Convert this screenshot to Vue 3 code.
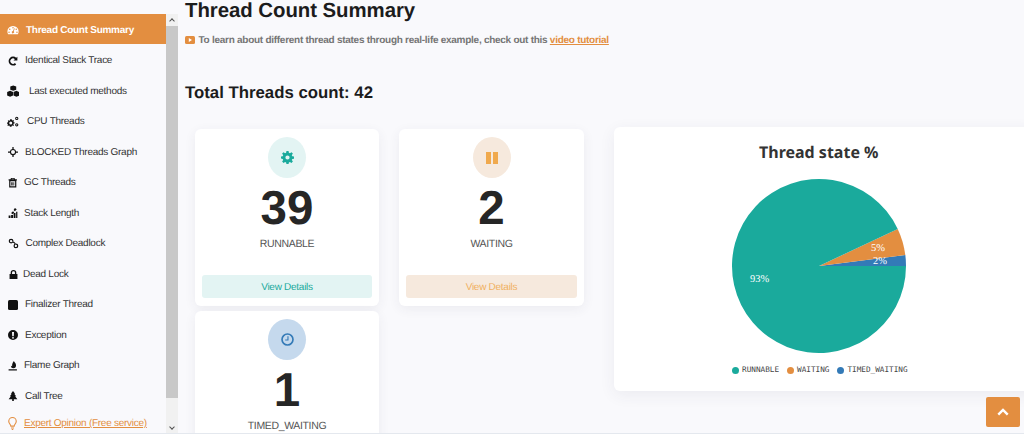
<script setup>
import { computed } from 'vue';

const menu = [
  { label: 'Thread Count Summary', icon: 'gauge', size: 12, gap: 7, active: true },
  { label: 'Identical Stack Trace', icon: 'redo', size: 10, gap: 6 },
  { label: 'Last executed methods', icon: 'cubes', size: 12.5, gap: 10 },
  { label: 'CPU Threads', icon: 'cogs', size: 12, gap: 8 },
  { label: 'BLOCKED Threads Graph', icon: 'cross', size: 10, gap: 6 },
  { label: 'GC Threads', icon: 'trash', size: 9.5, gap: 5 },
  { label: 'Stack Length', icon: 'steps', size: 10, gap: 5 },
  { label: 'Complex Deadlock', icon: 'link', size: 11, gap: 6.5 },
  { label: 'Dead Lock', icon: 'lock', size: 9, gap: 4 },
  { label: 'Finalizer Thread', icon: 'stop', size: 10, gap: 6 },
  { label: 'Exception', icon: 'alert', size: 10, gap: 6 },
  { label: 'Flame Graph', icon: 'flame', size: 9.5, gap: 5 },
  { label: 'Call Tree', icon: 'tree', size: 10, gap: 6 },
];

const pieData = [
  { name: 'TIMED_WAITING', pct: 2, color: '#337ab7' },
  { name: 'WAITING', pct: 5, color: '#e38e40' },
  { name: 'RUNNABLE', pct: 93, color: '#1aaa9c' },
];

const slices = computed(() => {
  let start = 0;
  return pieData.map((s) => {
    const a0 = (start * Math.PI) / 50;
    const a1 = ((start + s.pct) * Math.PI) / 50;
    start += s.pct;
    const x0 = 87 * Math.cos(a0);
    const y0 = -87 * Math.sin(a0);
    const x1 = 87 * Math.cos(a1);
    const y1 = -87 * Math.sin(a1);
    const large = s.pct > 50 ? 1 : 0;
    return { ...s, d: `M0 0L${x0} ${y0}A87 87 0 ${large} 0 ${x1} ${y1}Z` };
  });
});
const legend = [pieData[2], pieData[1], pieData[0]];
</script>

<template>
  <div class="page">
    <aside class="sidebar">
      <ul class="menu">
        <li v-for="item in menu" :key="item.label" class="item" :class="{ active: item.active }">
          <span class="slot" :style="{ marginRight: item.gap + 'px' }">
            <svg class="ico" viewBox="0 0 16 16" :style="{ width: item.size + 'px', height: item.size + 'px' }">
              <path v-if="item.icon === 'gauge'" fill-rule="evenodd" d="M8 2.5a7.5 7.5 0 0 0-7.5 7.5c0 1.4.4 2.6 1 3.6h13c.6-1 1-2.2 1-3.6A7.5 7.5 0 0 0 8 2.5zM8 4a1 1 0 1 1 0 2 1 1 0 0 1 0-2zM3.7 6a1 1 0 1 1 0 2 1 1 0 0 1 0-2zM12.3 6a1 1 0 1 1 0 2 1 1 0 0 1 0-2zM2.7 10a1 1 0 1 1 0 2 1 1 0 0 1 0-2zM13.3 10a1 1 0 1 1 0 2 1 1 0 0 1 0-2zM8 9.2l1.5-3.6.9.4L9 9.6a1.6 1.6 0 1 1-1-.4z" />
              <path v-else-if="item.icon === 'redo'" d="M15 1v6.300H8.700l2.300-2.300A4.300 4.300 0 1 0 11.100 11.200l2 2.200A7.200 7.200 0 1 1 13.100 2.900z" />
              <path v-else-if="item.icon === 'cubes'" d="M8 .5l3.800 1.500v4L8 7.500 4.200 6V2zM4 7.500L7.700 9v4.500L4 15 .2 13.500V9zM12 7.500L15.800 9v4.500L12 15l-3.700-1.500V9z" />
              <path v-else-if="item.icon === 'cogs'" fill-rule="evenodd" d="M5 4l1 .1.3 1.300 1 .5 1.200-.6.8.9-.7 1.100.4 1 1.300.3v1.200l-1.300.3-.4 1-.1.1.8 1.100-.9.9-1.100-.7-1 .4-.3 1.300H3.800l-.3-1.300-1-.4-1.100.7-.9-.9.7-1.100-.4-1L0 10V8.800l1.300-.3.4-1L1 6.400l.9-.9 1.100.7 1-.4.300-1.300zm0 3.400a2 2 0 1 0 0 4 2 2 0 0 0 0-4zM13 1a2.200 2.200 0 0 1 0 4.400A2.200 2.200 0 0 1 13 1zm0 1.400a.8.8 0 1 0 0 1.600.8.8 0 0 0 0-1.600zM13 9.500a2.200 2.200 0 0 1 0 4.400 2.200 2.200 0 0 1 0-4.400zm0 1.400a.8.8 0 1 0 0 1.600.8.8 0 0 0 0-1.600z" />
              <path v-else-if="item.icon === 'cross'" fill-rule="evenodd" d="M7 0h2v3a5 5 0 0 1 4 4h3v2h-3a5 5 0 0 1-4 4v3H7v-3a5 5 0 0 1-4-4H0V7h3a5 5 0 0 1 4-4zm1 4.800a3.200 3.200 0 1 0 0 6.400 3.200 3.200 0 0 0 0-6.400z" />
              <path v-else-if="item.icon === 'trash'" fill-rule="evenodd" d="M5 0h6l.8 2H15v2h-1v12H2V4H1V2h3.200zm1 2h4l-.4-.8H6.400zM4 5.500V14h8V5.500zM5.500 7h1.200v5.500H5.500zM7.400 7h1.200v5.500H7.400zM9.300 7h1.200v5.500H9.300z" />
              <path v-else-if="item.icon === 'steps'" d="M11 0l3 2-3 3-2-2zM8 5l2 2-3 3-2-2zM1 12h3v4H1zM5 11h3v5H5zM9 8h3v8H9zM13 6h2v10h-2z" />
              <path v-else-if="item.icon === 'link'" fill-rule="evenodd" d="M4.500 1a3.500 3.500 0 1 1 0 7 3.500 3.500 0 0 1 0-7zm0 1.800a1.700 1.700 0 1 0 0 3.400 1.700 1.700 0 0 0 0-3.400zM11.500 8a3.500 3.500 0 1 1 0 7 3.500 3.500 0 0 1 0-7zm0 1.800a1.700 1.700 0 1 0 0 3.400 1.700 1.700 0 0 0 0-3.400zM6.500 5.500l1.200-1.200 4 4-1.200 1.200z" />
              <path v-else-if="item.icon === 'lock'" fill-rule="evenodd" d="M8 0a5 5 0 0 1 5 5v2h2v9H1V7h2V5a5 5 0 0 1 5-5zm0 2.400A2.600 2.600 0 0 0 5.400 5v2h5.200V5A2.600 2.600 0 0 0 8 2.400z" />
              <rect v-else-if="item.icon === 'stop'" x="0" y="0" width="16" height="16" rx="2.500" />
              <path v-else-if="item.icon === 'alert'" fill-rule="evenodd" d="M8 0a8 8 0 1 1 0 16A8 8 0 0 1 8 0zM6.400 3l.4 7h2.400l.4-7zM8 11a1.500 1.500 0 1 0 0 3 1.500 1.500 0 0 0 0-3z" />
              <path v-else-if="item.icon === 'flame'" d="M10 0c.5 2.500 3.500 3.500 3.500 7a4.800 4.800 0 0 1-4.500 5C6 12 4.500 10 5 7.500c.5 1 1.200 1.500 2 1.500C6.500 6 7.500 3 10 0zM1 13.800h14V16H1z" />
              <path v-else-if="item.icon === 'tree'" d="M8 0l3.500 4.500H10l3 4h-1.700L15 13H9.300v3H6.700v-3H1l3.700-4.500H3l3-4H4.500z" />
            </svg>
          </span>
          <span>{{ item.label }}</span>
        </li>
        <li class="item expert">
          <svg class="bulb" viewBox="0 0 12 18" fill="none" stroke="#e38e40" stroke-width="1.500">
            <path d="M3.800 12.500C3.500 10 1 9 1 6a5 5 0 0 1 10 0c0 3-2.500 4-2.800 6.500z" />
            <path d="M4 15h4M5 17h2" />
          </svg>
          <a>Expert Opinion (Free service)</a>
        </li>
      </ul>
      <div class="scrollbar">
        <span class="arrow up"></span>
        <span class="thumb"></span>
        <span class="arrow down"></span>
      </div>
    </aside>

    <main class="content">
      <h1>Thread Count Summary</h1>
      <p class="note">
        <svg class="yt" viewBox="0 0 10 8"><rect width="10" height="8" rx="1.500" fill="#e38e40" /><path d="M3.800 2l3.200 2-3.200 2z" fill="#fff" /></svg>
        To learn about different thread states through real-life example, check out this
        <a>video tutorial</a>
      </p>
      <h2>Total Threads count: 42</h2>

      <div class="summary">
        <div class="cards">
          <section class="card">
            <div class="badge teal">
              <svg viewBox="0 0 16 16" width="13" height="13"><path fill="#1aaa9c" fill-rule="evenodd" d="M6.700 0h2.600l.4 2.200 1.300.6L12.900 1.500l1.700 1.700-1.300 1.900.6 1.300 2.100.4v2.600l-2.100.4-.6 1.300 1.300 1.900-1.700 1.700-1.900-1.300-1.300.6-.4 2.000H6.700l-.4-2.000-1.300-.6-1.900 1.300-1.700-1.700 1.300-1.900-.6-1.300L0 9.300V6.800l2.100-.4.6-1.300L1.400 3.200l1.700-1.700L5 2.800l1.300-.6zM8 5.400a2.600 2.600 0 1 0 0 5.200 2.600 2.600 0 0 0 0-5.200z" /></svg>
            </div>
            <div class="count">39</div>
            <div class="state">RUNNABLE</div>
            <div class="details teal-btn">View Details</div>
          </section>
          <section class="card">
            <div class="badge sand">
              <svg viewBox="0 0 12 12" width="12" height="12"><path fill="#f0a94d" d="M0 0h5v12H0zM7 0h5v12H7z" /></svg>
            </div>
            <div class="count">2</div>
            <div class="state">WAITING</div>
            <div class="details sand-btn">View Details</div>
          </section>
          <section class="card">
            <div class="badge blue">
              <svg viewBox="0 0 14 14" width="13" height="13" fill="none" stroke="#337ab7"><circle cx="7" cy="7" r="5.900" stroke-width="1.800" /><path d="M7.500 3.500v4H4.500" stroke-width="1.200" /></svg>
            </div>
            <div class="count">1</div>
            <div class="state">TIMED_WAITING</div>
            <div class="details blue-btn">View Details</div>
          </section>
        </div>

        <section class="chart">
          <div class="chart-title">Thread state %</div>
          <svg class="pie" viewBox="-88 -88 176 176" width="176" height="176">
            <path v-for="s in slices" :key="s.name" :d="s.d" :fill="s.color" />
            <text x="-69" y="16" class="lbl">93%</text>
            <text x="52" y="-15" class="lbl">5%</text>
            <text x="54" y="-2" class="lbl">2%</text>
          </svg>
          <div class="legend">
            <span v-for="s in legend" :key="s.name" class="leg"><i :style="{ background: s.color }"></i>{{ s.name }}</span>
          </div>
        </section>
      </div>
    </main>

    <button class="top">
      <svg viewBox="0 0 14 9" width="12" height="8"><path d="M1.500 7.500L7 2l5.500 5.500" fill="none" stroke="#fff" stroke-width="2.800" /></svg>
    </button>
  </div>
</template>

<style>
html, body {
  margin: 0;
  height: 434px;
  overflow: hidden;
  background: #f9f9fc;
}
</style>

<style scoped>
.page {
  display: flex;
  height: 434px;
  box-sizing: border-box;
  overflow: hidden;
  position: relative;
  font-family: "Liberation Sans", Arial, sans-serif;
  text-rendering: geometricPrecision;
  background: #f9f9fc;
  color: #212121;
  border-bottom: 1px solid #e4e8ee;
}

.sidebar {
  display: flex;
  flex: none;
  width: 178px;
  padding-top: 14px;
  box-sizing: border-box;
}

.menu {
  list-style: none;
  margin: 0;
  padding: 0;
  width: 166px;
  flex: none;
}

.item {
  display: flex;
  align-items: center;
  height: 30.5px;
  box-sizing: border-box;
  padding: 2px 0 0 7px;
  font-size: 10px;
  letter-spacing: -.27px;
  color: #333;
  white-space: nowrap;
}

.item.active {
  background: #e38e40;
  color: #fff;
  font-weight: 700;
  height: 30px;
  margin-bottom: .5px;
}

.slot {
  width: 12px;
  display: flex;
  justify-content: center;
  flex: none;
}

.ico {
  fill: #111;
  flex: none;
}

.active .ico {
  fill: #fff;
}

.expert {
  height: 24px;
  gap: 7px;
  padding-left: 8px;
}

.expert a {
  color: #e38e40;
  text-decoration: underline;
}

.bulb {
  width: 9px;
  height: 15px;
  flex: none;
}

.scrollbar {
  width: 12px;
  height: 420px;
  background: #f1f1f1;
  display: flex;
  flex-direction: column;
  align-items: center;
}

.arrow {
  height: 12px;
  flex: none;
  width: 100%;
  position: relative;
}

.arrow::before {
  content: "";
  position: absolute;
  left: 4px;
  width: 3px;
  height: 3px;
  border-left: 1px solid #505050;
  border-top: 1px solid #505050;
}

.up::before {
  top: 5px;
  transform: rotate(45deg);
}

.down::before {
  top: 3px;
  transform: rotate(225deg);
}

.thumb {
  width: 100%;
  height: 372px;
  background: #c8c8c8;
  flex: none;
}

.down {
  margin-top: auto;
}

.content {
  flex: 1;
  min-width: 0;
  padding-left: 7px;
}

h1 {
  margin: 0;
  font-size: 20.4px;
  line-height: 22px;
  font-weight: 700;
  letter-spacing: -.05px;
  color: #1c1c1c;
}

.note {
  margin: 13px 0 0;
  font-size: 10px;
  line-height: 12px;
  font-weight: 700;
  letter-spacing: -.27px;
  color: #757575;
  white-space: nowrap;
}

.note a {
  color: #e38e40;
  text-decoration: underline;
}

.yt {
  width: 10px;
  height: 8px;
  vertical-align: -0.5px;
  margin-right: 1px;
}

h2 {
  margin: 36px 0 0;
  font-size: 16.8px;
  line-height: 20px;
  font-weight: 700;
  color: #1c1c1c;
}

.summary {
  display: flex;
  margin-top: 24px;
  align-items: flex-start;
}

.cards {
  display: grid;
  grid-template-columns: 184px 185px;
  column-gap: 20px;
  row-gap: 5px;
  margin: 2px 0 0 10px;
  flex: none;
}

.card {
  height: 177px;
  background: #fff;
  border-radius: 6px;
  box-shadow: 0 3px 12px rgba(60, 60, 90, .07);
  display: flex;
  flex-direction: column;
  align-items: center;
  padding: 8px 7px 0;
  box-sizing: border-box;
}

.badge {
  width: 38px;
  height: 41px;
  border-radius: 50%;
  display: flex;
  align-items: center;
  justify-content: center;
  flex: none;
}

.teal { background: #e3f4f3; }
.sand { background: #f6e9dd; }
.blue { background: #c5d9ed; }

.count {
  font-size: 47.5px;
  font-weight: 700;
  line-height: 54px;
  margin-top: 4px;
  color: #262626;
}

.state {
  font-size: 10.5px;
  letter-spacing: -.35px;
  line-height: 14px;
  margin-top: 1px;
  color: #555;
}

.details {
  margin-top: auto;
  margin-bottom: 8px;
  width: 100%;
  height: 23px;
  box-sizing: border-box;
  padding-top: 1px;
  border-radius: 3px;
  font-size: 10px;
  letter-spacing: -.27px;
  line-height: 23px;
  text-align: center;
}

.teal-btn { background: #e3f4f3; color: #1aaa9c; }
.sand-btn { background: #f6e9dd; color: #f0b060; }
.blue-btn { background: #c5d9ed; color: #337ab7; }

.chart {
  margin-left: 30px;
  width: 430px;
  height: 264px;
  flex: none;
  background: #fff;
  border-radius: 6px;
  box-shadow: 0 4px 16px rgba(60, 60, 90, .07);
  display: flex;
  flex-direction: column;
  align-items: flex-start;
  box-sizing: border-box;
}

.chart-title {
  font-family: "Noto Sans", sans-serif;
  font-weight: 700;
  font-size: 16px;
  line-height: 22px;
  margin: 14px 0 0 145px;
  color: #333;
}

.pie {
  margin: 15px 0 0 117px;
  flex: none;
}

.lbl {
  font-family: "Liberation Serif", serif;
  font-size: 10.5px;
  fill: #fff;
}

.legend {
  display: flex;
  gap: 8px;
  margin: 11px 0 0 118px;
  font-family: "DejaVu Sans Mono", monospace;
  font-size: 7.7px;
  line-height: 10px;
  color: #444;
}

.leg {
  display: flex;
  align-items: center;
  gap: 3px;
}

.leg i {
  width: 7px;
  height: 7px;
  border-radius: 50%;
}

.top {
  position: absolute;
  left: 986px;
  top: 397px;
  width: 34px;
  height: 30px;
  border: 0;
  padding: 0;
  border-radius: 2px;
  background: #e38e40;
  display: flex;
  align-items: center;
  justify-content: center;
}
</style>
